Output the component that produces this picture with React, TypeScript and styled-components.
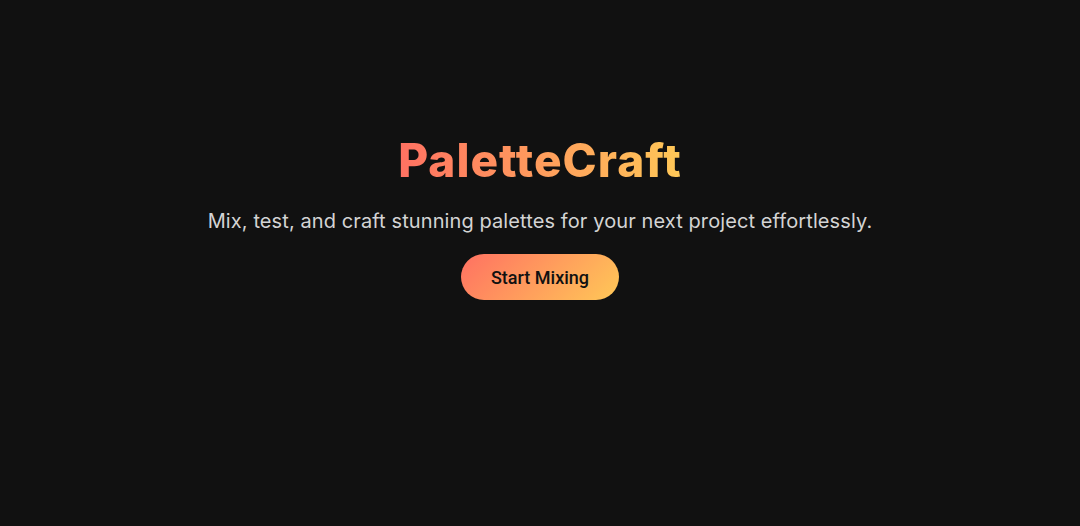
import React from "react";
import styled, { createGlobalStyle } from "styled-components";

const Global = createGlobalStyle`
  html, body { margin: 0; padding: 0; background: #111111; }
  body { font-family: Inter, "Noto Sans", sans-serif; }
`;

const Page = styled.main`
  min-height: 526px;
  display: flex;
  flex-direction: column;
  align-items: center;
  padding-top: 128px;
  box-sizing: border-box;
  text-align: center;
`;

const Title = styled.h1`
  margin: 0;
  font-family: Inter, sans-serif;
  font-weight: 800;
  font-size: 46px;
  line-height: 64px;
  letter-spacing: 1px;
  background: linear-gradient(90deg, #ff7162, #ffc857);
  -webkit-background-clip: text;
  background-clip: text;
  color: transparent;
`;

const Subtitle = styled.p`
  margin: 15px 0 0;
  font-family: Inter, sans-serif;
  font-size: 20px;
  line-height: 28px;
  letter-spacing: 0.1px;
  color: #d4d4d4;
`;

const CTA = styled.button`
  margin-top: 19px;
  width: 158px;
  height: 46px;
  border: none;
  border-radius: 999px;
  background: linear-gradient(135deg, #ff7162, #ffc857);
  font-family: Roboto, sans-serif;
  font-weight: 500;
  font-size: 18px;
  color: #111111;
  cursor: pointer;
`;

export default function App() {
  return (
    <>
      <Global />
      <Page>
        <Title>PaletteCraft</Title>
        <Subtitle>Mix, test, and craft stunning palettes for your next project effortlessly.</Subtitle>
        <CTA>Start Mixing</CTA>
      </Page>
    </>
  );
}
